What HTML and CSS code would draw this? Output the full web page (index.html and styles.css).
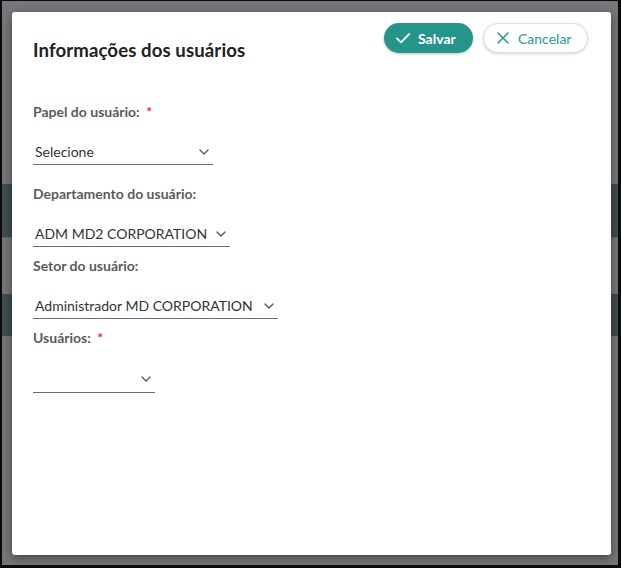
FILE: index.html
```html
<!DOCTYPE html>
<html lang="pt-BR">
<head>
<meta charset="utf-8">
<title>Informações dos usuários</title>
<link rel="stylesheet" href="styles.css">
</head>
<body>
<div class="screen">
  <div class="backdrop">
    <div class="bg-gap bg-gap-1"></div>
    <div class="band band-1"></div>
    <div class="bg-gap bg-gap-2"></div>
    <div class="band band-2"></div>

    <div class="modal">
      <div class="modal-header">
        <h1 class="title">Informações dos usuários</h1>
        <div class="actions">
          <button class="btn btn-primary" type="button">
            <svg class="btn-icon" viewBox="0 0 16 16" width="16" height="16"><path d="M2 8.5 L6 12.3 L14.2 4" fill="none" stroke="#fff" stroke-width="1.8" stroke-linecap="round" stroke-linejoin="round"/></svg>
            Salvar
          </button>
          <button class="btn btn-outline" type="button">
            <svg class="btn-icon" viewBox="0 0 16 16" width="16" height="16"><path d="M3 3 L13 13 M13 3 L3 13" fill="none" stroke="#2a9a90" stroke-width="1.6" stroke-linecap="round"/></svg>
            Cancelar
          </button>
        </div>
      </div>

      <div class="form">
        <div class="field field-1">
          <div class="label">Papel do usuário: <span class="req">*</span></div>
          <div class="select select-w1">
            <span class="value">Selecione</span>
            <svg class="chev" viewBox="0 0 10 6" width="10" height="6"><path d="M1 1 L5 5 L9 1" fill="none" stroke="#555" stroke-width="1.3" stroke-linecap="round" stroke-linejoin="round"/></svg>
          </div>
        </div>
        <div class="field field-2">
          <div class="label">Departamento do usuário:</div>
          <div class="select select-w2">
            <span class="value">ADM MD2 CORPORATION</span>
            <svg class="chev" viewBox="0 0 10 6" width="10" height="6"><path d="M1 1 L5 5 L9 1" fill="none" stroke="#555" stroke-width="1.3" stroke-linecap="round" stroke-linejoin="round"/></svg>
          </div>
        </div>
        <div class="field field-3">
          <div class="label">Setor do usuário:</div>
          <div class="select select-w3">
            <span class="value">Administrador MD CORPORATION</span>
            <svg class="chev" viewBox="0 0 10 6" width="10" height="6"><path d="M1 1 L5 5 L9 1" fill="none" stroke="#555" stroke-width="1.3" stroke-linecap="round" stroke-linejoin="round"/></svg>
          </div>
        </div>
        <div class="field field-4">
          <div class="label">Usuários: <span class="req">*</span></div>
          <div class="select select-w4">
            <span class="value"></span>
            <svg class="chev" viewBox="0 0 10 6" width="10" height="6"><path d="M1 1 L5 5 L9 1" fill="none" stroke="#555" stroke-width="1.3" stroke-linecap="round" stroke-linejoin="round"/></svg>
          </div>
        </div>
      </div>
    </div>
  </div>
</div>
</body>
</html>
```
FILE: styles.css
```css
* { box-sizing: border-box; }
html, body { margin: 0; padding: 0; }
body {
  background: #000;
  font-family: "Lato", "Open Sans", sans-serif;
}
.screen {
  width: 621px;
  height: 568px;
  background: #0b0b0b;
  padding: 1px 3px 3px 2px;
}
.backdrop {
  position: relative;
  width: 100%;
  height: 100%;
  background: #77777b;
  display: flex;
  flex-direction: column;
  overflow: hidden;
}
.bg-gap-1 { height: 183px; }
.band-1 {
  height: 54px;
  background: #414d51;
  border-bottom: 1px solid #5d6569;
}
.bg-gap-2 { height: 56px; }
.band-2 {
  height: 42px;
  background: #414d51;
}

.modal {
  position: absolute;
  left: 10px;
  top: 11px;
  width: 599px;
  height: 543px;
  background: #fff;
  border-radius: 3px;
  box-shadow: 0 3px 10px rgba(0,0,0,0.45);
  padding: 12px 23px 0 21px;
}
.modal-header {
  display: flex;
  justify-content: space-between;
  align-items: flex-start;
}
.title {
  margin: 14px 0 0 0;
  font-size: 18.6px;
  font-weight: 700;
  color: #222;
  letter-spacing: 0.1px;
  line-height: 24px;
}
.actions {
  display: flex;
  gap: 10px;
  margin-top: -1px;
}
.btn {
  height: 30px;
  border-radius: 15px;
  font-family: "Lato", "Open Sans", sans-serif;
  font-size: 14px;
  display: flex;
  align-items: center;
  gap: 7px;
  cursor: pointer;
  padding-bottom: 1px;
}
.btn-icon { flex: none; }
.btn-primary {
  width: 89px;
  background: #25948b;
  color: #fff;
  border: none;
  padding-left: 11px;
  box-shadow: 0 1px 3px rgba(0,0,0,0.25);
  font-weight: 700;
}
.btn-outline {
  width: 105px;
  background: #fff;
  color: #2a9a90;
  border: 1px solid #cde9e6;
  padding-left: 11px;
  box-shadow: 0 1px 3px rgba(0,0,0,0.18);
}

.form {
  display: flex;
  flex-direction: column;
}
.field { display: flex; flex-direction: column; }
.field-1 { margin-top: 40px; }
.field-2 { margin-top: 19px; }
.field-3 { margin-top: 9px; }
.field-4 { margin-top: 9px; }
.label {
  font-size: 14px;
  font-weight: 700;
  color: #5b5b5b;
  line-height: 20px;
}
.req { color: #e0303a; margin-left: 3px; }
.select {
  margin-top: 19px;
  height: 24px;
  display: flex;
  align-items: center;
  justify-content: space-between;
  border-bottom: 1px solid #6a6a6a;
  padding: 0 4px 2px 2px;
}
.value {
  font-size: 14px;
  color: #333;
  white-space: nowrap;
}
.chev { flex: none; margin-left: 8px; }
.select-w1 { width: 180px; }
.select-w2 { width: 197px; }
.select-w3 { width: 245px; }
.select-w4 { width: 122px; height: 26px; }
```
